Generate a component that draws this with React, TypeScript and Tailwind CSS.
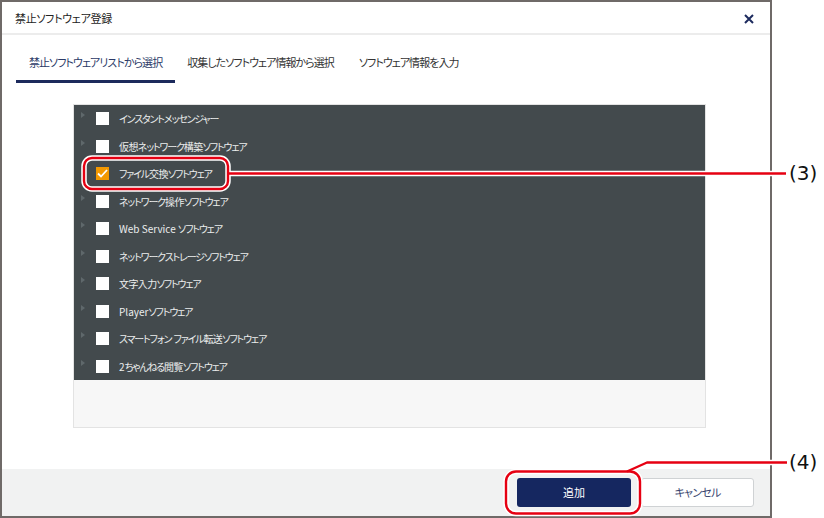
import React from "react";

const ITEMS = [
  "インスタントメッセンジャー",
  "仮想ネットワーク構築ソフトウェア",
  "ファイル交換ソフトウェア",
  "ネットワーク操作ソフトウェア",
  "Web Service ソフトウェア",
  "ネットワークストレージソフトウェア",
  "文字入力ソフトウェア",
  "Playerソフトウェア",
  "スマートフォン ファイル転送ソフトウェア",
  "2ちゃんねる閲覧ソフトウェア",
];
const CHECKED = 2;

const JP = { fontFamily: '"Noto Sans CJK JP", "Noto Sans", sans-serif' };

// Latin runs keep normal spacing; kana are tightened to match the narrow UI font,
// kanji a little less so they don't collide
function Label({ text }: { text: string }) {
  const parts = text.split(/([A-Za-z0-9 ]+|[\u4e00-\u9fff]+)/).filter(Boolean);
  return (
    <>
      {parts.map((p, i) => {
        if (/^[A-Za-z0-9 ]+$/.test(p)) return <span key={i}>{p}</span>;
        if (/^[\u4e00-\u9fff]+$/.test(p))
          return (
            <span key={i} className="tracking-[-0.6px]">
              {p}
            </span>
          );
        return (
          <span key={i} className="tracking-[-1.15px]">
            {p}
          </span>
        );
      })}
    </>
  );
}

function Row({ label, checked }: { label: string; checked: boolean }) {
  return (
    <div className="flex h-[27.5px] items-center">
      <svg width="4" height="6" viewBox="0 0 4 6" className="ml-[7px] mt-[-7px]">
        <path d="M0 0 L4 3 L0 6 Z" fill="#5f686b" />
      </svg>
      <span
        className={
          "ml-[11px] flex size-[13px] items-center justify-center " +
          (checked ? "bg-[#f39800]" : "bg-white")
        }
      >
        {checked && (
          <svg width="11" height="9" viewBox="0 0 11 9">
            <path d="M1 4.5 L4 7.5 L10 1" fill="none" stroke="#fff" strokeWidth="1.8" />
          </svg>
        )}
      </span>
      <span className="ml-[10px] text-[10px] text-[#eceeee] [font-feature-settings:'palt']">
        <Label text={label} />
      </span>
    </div>
  );
}

function Callouts() {
  return (
    <svg className="pointer-events-none absolute left-0 top-0" width="824" height="518">
      <g fill="none" stroke="#fff" strokeWidth="5.5" strokeLinejoin="round">
        <rect x="84" y="158" width="144" height="31" rx="8" />
        <line x1="228" y1="173.5" x2="786" y2="173.5" />
        <rect x="506" y="471.5" width="134" height="42" rx="10" />
        <polyline points="627,471.5 647,462.5 787,462.5" />
      </g>
      <g fill="none" stroke="#e60012" strokeWidth="2.4" strokeLinejoin="round">
        <rect x="84" y="158" width="144" height="31" rx="8" />
        <line x1="228" y1="173.5" x2="786" y2="173.5" />
        <rect x="506" y="471.5" width="134" height="42" rx="10" />
        <polyline points="627,471.5 647,462.5 787,462.5" />
      </g>
    </svg>
  );
}

export default function App() {
  return (
    <div className="relative h-[518px] w-[824px] overflow-hidden bg-white" style={JP}>
      <div className="flex h-[518px] w-[772px] flex-col border-2 border-[#6f6a68] bg-white">
        {/* header */}
        <div className="flex h-[33px] shrink-0 items-center justify-between border-b-2 border-[#ececec] pl-[13px] pr-[16px]">
          <span className="mt-[2px] text-[11px] tracking-[-0.3px] text-[#222] [font-feature-settings:'palt']">
            禁止ソフトウェア登録
          </span>
          <svg width="10" height="10" viewBox="0 0 10 10" className="mt-[2px]">
            <path d="M1 1 L9 9 M9 1 L1 9" stroke="#1d2b5e" strokeWidth="2" />
          </svg>
        </div>

        {/* tabs */}
        <div className="mt-[19px] flex pl-[14px] text-[11px] leading-[16px] tracking-[-0.95px] [font-feature-settings:'palt']">
          <div className="border-b-[3px] border-[#1c2a5c] px-[13px] pb-[10px] text-[#2b3a67]">
            禁止ソフトウェアリストから選択
          </div>
          <div className="px-[12px] pb-[10px] text-[#333]">収集したソフトウェア情報から選択</div>
          <div className="px-[13px] pb-[10px] text-[#333]">ソフトウェア情報を入力</div>
        </div>

        {/* list */}
        <div className="ml-[71px] mt-[21px] w-[633px] border border-[#e3e3e3]">
          <div className="bg-[#434a4d]">
            {ITEMS.map((it, i) => (
              <Row key={it} label={it} checked={i === CHECKED} />
            ))}
          </div>
          <div className="h-[47px] bg-[#f7f7f7]" />
        </div>

        {/* footer */}
        <div className="mt-auto flex h-[47px] items-center justify-end gap-[10px] bg-[#f1f2f2] pr-[16px]">
          <button className="h-[29px] w-[114px] rounded-[3px] bg-[#152760] text-[11px] text-white">
            追加
          </button>
          <button className="h-[29px] w-[113px] rounded-[3px] border border-[#cfd2d4] bg-white text-[11px] tracking-[-0.8px] text-[#3a4670] [font-feature-settings:'palt']">
            キャンセル
          </button>
        </div>
      </div>

      <Callouts />
      <span
        className="absolute left-[789px] top-[160px] text-[20px] leading-[26px] text-[#111]"
        style={{ fontFamily: '"DejaVu Sans", sans-serif' }}
      >
        (3)
      </span>
      <span
        className="absolute left-[789px] top-[449px] text-[20px] leading-[26px] text-[#111]"
        style={{ fontFamily: '"DejaVu Sans", sans-serif' }}
      >
        (4)
      </span>
    </div>
  );
}
